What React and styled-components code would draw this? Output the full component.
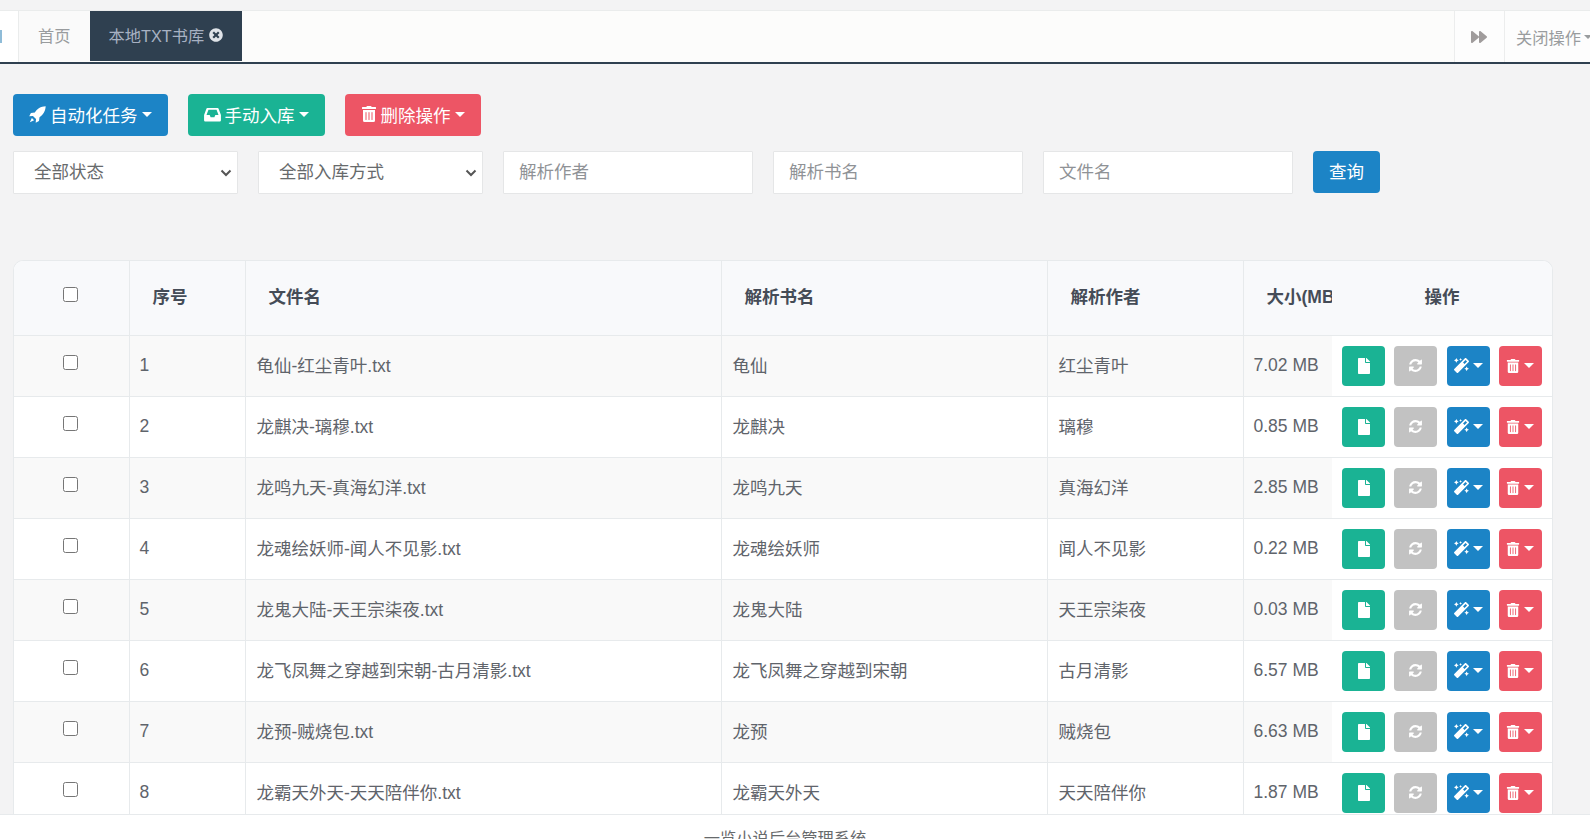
import React from 'react'
import styled, { createGlobalStyle } from 'styled-components'
import { FaFile, FaMagic, FaTrashAlt, FaTimesCircle, FaForward } from 'react-icons/fa'

const rows = [
  ['龟仙-红尘青叶.txt', '龟仙', '红尘青叶', '7.02 MB'],
  ['龙麒决-璃穆.txt', '龙麒决', '璃穆', '0.85 MB'],
  ['龙鸣九天-真海幻洋.txt', '龙鸣九天', '真海幻洋', '2.85 MB'],
  ['龙魂绘妖师-闻人不见影.txt', '龙魂绘妖师', '闻人不见影', '0.22 MB'],
  ['龙鬼大陆-天王宗柒夜.txt', '龙鬼大陆', '天王宗柒夜', '0.03 MB'],
  ['龙飞凤舞之穿越到宋朝-古月清影.txt', '龙飞凤舞之穿越到宋朝', '古月清影', '6.57 MB'],
  ['龙预-贼烧包.txt', '龙预', '贼烧包', '6.63 MB'],
  ['龙霸天外天-天天陪伴你.txt', '龙霸天外天', '天天陪伴你', '1.87 MB'],
]

const colors = { blue: '#1c84c6', green: '#1ab394', red: '#ed5565', gray: '#c2c2c2' }

const chevron = encodeURIComponent(
  '<svg xmlns="http://www.w3.org/2000/svg" width="12" height="8" viewBox="0 0 12 8"><path d="M1.5 1.5 6 6l4.5-4.5" fill="none" stroke="#555" stroke-width="2"/></svg>'
)

const RocketIcon = () => (
  <svg width="17" height="17" viewBox="0 0 16 16" fill="currentColor">
    <path d="M15.7.3C11 .5 7.5 2.8 5.5 6.1L1.8 6.6.2 9.7l3.5-.3 2.9 2.9-.3 3.5 3.1-1.6.5-3.7c3.3-2 5.6-5.5 5.8-10.2z" />
    <path d="M2.7 11.2l2.1 2.1L.8 15.2z" />
  </svg>
)

const InboxIcon = () => (
  <svg width="17" height="15" viewBox="0 0 18 16" fill="currentColor">
    <path
      fillRule="evenodd"
      d="M3.5 1h11c.4 0 .7.2.9.6L18 8.4V14c0 .8-.7 1.5-1.5 1.5h-15C.7 15.500 0 14.800 0 14V8.400l2.600-6.800c.2-.4.5-.6.900-.6zM4.700 3 2.600 8.500H6l1 2.500h4l1-2.500h3.400L13.300 3z"
    />
  </svg>
)

const RefreshIcon = () => (
  <svg width="15" height="15" viewBox="0 0 1792 1792" fill="currentColor">
    <path d="M1639 1056q0 5-1 7-64 268-268 434.500t-478 166.500q-146 0-282.500-55t-243.500-157l-129 129q-19 19-45 19t-45-19-19-45v-448q0-26 19-45t45-19h448q26 0 45 19t19 45-19 45l-137 137q71 66 161 102t187 36q134 0 250-65t186-179q11-17 53-117 8-23 30-23h192q13 0 22.500 9.500t9.500 22.500zm25-800v448q0 26-19 45t-45 19h-448q-26 0-45-19t-19-45 19-45l138-138q-148-137-349-137-134 0-250 65t-186 179q-11 17-53 117-8 23-30 23h-199q-13 0-22.500-9.500t-9.500-22.500v-7q65-268 270-434.500t480-166.500q146 0 284 55.500t245 156.500l130-129q19-19 45-19t45 19 19 45z" />
  </svg>
)

const GlobalStyle = createGlobalStyle`
  html, body {
    margin: 0;
    height: 100%;
    overflow: hidden;
    background: #f3f3f4;
    font-family: "Liberation Sans", "Noto Sans CJK SC", sans-serif;
    color: #676a6c;
  }
  * { box-sizing: border-box; }
`

const Page = styled.div`
  height: 839px;
  display: flex;
  flex-direction: column;
  overflow: hidden;
`

const TabBar = styled.div`
  margin-top: 10px;
  height: 54px;
  flex: none;
  display: flex;
  background: #fcfcfb;
  border-top: 1px solid #eaecec;
  border-bottom: 2px solid #2f4050;
  font-size: 16.25px;
  color: #999c9e;
`

const BackTab = styled.div`
  width: 19px;
  background: #fff;
  border-right: 1px solid #eaecec;
  display: flex;
  align-items: center;
  &::before {
    content: "";
    width: 2px;
    height: 13px;
    background: #8fbcd8;
  }
`

const Tab = styled.div`
  display: flex;
  align-items: center;
  gap: 5px;
  height: 50px;
  padding: 0 19px 2px;
  color: ${p => (p.active ? '#a7b1c2' : '#999c9e')};
  background: ${p => (p.active ? '#2f4050' : '#fafafa')};
  svg { font-size: 14px; color: #dfe3e8; }
`

const TabSpacer = styled.div`
  flex: 1;
`

const TabTool = styled.div`
  display: flex;
  align-items: center;
  justify-content: center;
  flex: none;
  width: ${p => p.width}px;
  padding-right: 2px;
  border-left: 1px solid #eceded;
  background: #fdfdfd;
  white-space: nowrap;
  overflow: hidden;
  svg { font-size: 16px; color: #a09c9c; }
`

const CloseTool = styled(TabTool)`
  justify-content: flex-start;
  padding: 0 0 0 11px;
  gap: 3px;
`

const Main = styled.main`
  flex: 1;
  min-height: 0;
  overflow: hidden;
  padding: 30px 38px 0 13px;
`

const Toolbar = styled.div`
  display: flex;
  gap: 20px;
`

const Caret = styled.span`
  display: inline-block;
  flex: none;
  width: 0;
  height: 0;
  border-left: ${p => p.size || 5}px solid transparent;
  border-right: ${p => p.size || 5}px solid transparent;
  border-top: ${p => p.size || 5}px solid currentColor;
`

const ActionButton = styled.button`
  height: 42px;
  display: flex;
  align-items: center;
  gap: 4px;
  padding: 0 16px 2px;
  border: 0;
  border-radius: 4px;
  background: ${p => colors[p.tone]};
  color: #fff;
  font: inherit;
  font-size: 17.5px;
  svg { flex: none; }
`

const NarrowIconButton = styled(ActionButton)`
  svg { font-size: 16px; }
`

const Filters = styled.div`
  display: flex;
  gap: 20px;
  margin-top: 15px;
  height: 43px;
`

const Select = styled.select`
  appearance: none;
  width: 225px;
  height: 43px;
  padding: 0 20px 2px;
  border: 1px solid #e5e6e7;
  border-radius: 1px;
  background: #fff url("data:image/svg+xml,${chevron}") no-repeat right 5px center;
  color: #676a6c;
  font: inherit;
  font-size: 17.5px;
`

const TextInput = styled.input`
  width: 250px;
  height: 43px;
  padding: 0 15px;
  border: 1px solid #e5e6e7;
  border-radius: 1px;
  background: #fff;
  font: inherit;
  font-size: 17.5px;
  &::placeholder { color: #8f9296; opacity: 1; }
`

const QueryButton = styled(ActionButton)`
  width: 67px;
  justify-content: center;
  padding: 0 0 3px;
`

const TableCard = styled.div`
  margin-top: 66px;
  width: 1540px;
  background: #fff;
  border: 1px solid #e7eaec;
  border-bottom: 0;
  border-radius: 10px 10px 0 0;
  overflow: hidden;
`

const Table = styled.table`
  width: 100%;
  table-layout: fixed;
  border-collapse: collapse;
  font-size: 17.5px;
`

const HeadRow = styled.tr`
  height: 74px;
  background: #f8f9fb;
`

const BodyRow = styled.tr`
  height: 61px;
  background: ${p => (p.striped ? '#f9f9f9' : '#fff')};
`

const Th = styled.th`
  padding: 0 0 4px ${p => p.pad ?? 23}px;
  text-align: ${p => p.align || 'left'};
  border-right: ${p => (p.noRule ? '0' : '1px solid #e7eaec')};
  border-bottom: 1px solid #e7eaec;
  color: #454c57;
  font-weight: 700;
  white-space: nowrap;
  overflow: hidden;
`

const HeadCheckCell = styled(Th)`
  padding: 0;
`

const Td = styled.td`
  padding: 0 0 0 10px;
  border-right: ${p => (p.noRule ? '0' : '1px solid #e7eaec')};
  border-bottom: 1px solid #e7eaec;
  color: #5f646b;
  white-space: nowrap;
  overflow: hidden;
`

const CheckCell = styled(Td)`
  padding: 0;
`

const TextCell = styled(Td)`
  padding: 0 0 3px 11px;
`

const OpCell = styled(Td)`
  background: #fff;
  padding: 0 10px;
`

const Ops = styled.div`
  display: flex;
  justify-content: space-between;
`

const OpButton = styled.button`
  width: 43px;
  height: 40px;
  display: flex;
  align-items: center;
  justify-content: center;
  gap: 4px;
  padding: 0;
  border: 0;
  border-radius: 4px;
  background: ${p => colors[p.tone]};
  color: #fff;
  svg { font-size: ${p => p.icon || 14}px; }
`

const Check = styled.input.attrs({ type: 'checkbox' })`
  display: block;
  width: 15px;
  height: 15px;
  margin: 0 0 6px 49px;
`

const Footer = styled.footer`
  flex: none;
  height: 25px;
  overflow: hidden;
  padding: 13px 20px 0 0;
  background: #fff;
  border-top: 1px solid #e7eaec;
  font-size: 16.25px;
  line-height: 20px;
  text-align: center;
  color: #676a6c;
`

export default function App() {
  return (
    <Page>
      <GlobalStyle />
      <TabBar>
        <BackTab />
        <Tab>首页</Tab>
        <Tab active>本地TXT书库 <FaTimesCircle /></Tab>
        <TabSpacer />
        <TabTool width={50}><FaForward /></TabTool>
        <CloseTool width={86}>关闭操作 <Caret size={4} /></CloseTool>
      </TabBar>
      <Main>
        <Toolbar>
          <ActionButton tone="blue"><RocketIcon />自动化任务<Caret /></ActionButton>
          <ActionButton tone="green"><InboxIcon />手动入库<Caret /></ActionButton>
          <NarrowIconButton tone="red"><FaTrashAlt />删除操作<Caret /></NarrowIconButton>
        </Toolbar>
        <Filters>
          <Select><option>全部状态</option></Select>
          <Select><option>全部入库方式</option></Select>
          <TextInput placeholder="解析作者" />
          <TextInput placeholder="解析书名" />
          <TextInput placeholder="文件名" />
          <QueryButton tone="blue">查询</QueryButton>
        </Filters>
        <TableCard>
          <Table>
            <colgroup>
              <col style={{ width: 115 }} />
              <col style={{ width: 116 }} />
              <col style={{ width: 476 }} />
              <col style={{ width: 326 }} />
              <col style={{ width: 196 }} />
              <col style={{ width: 89 }} />
              <col style={{ width: 220 }} />
            </colgroup>
            <thead>
              <HeadRow>
                <HeadCheckCell><Check /></HeadCheckCell>
                <Th>序号</Th>
                <Th>文件名</Th>
                <Th>解析书名</Th>
                <Th>解析作者</Th>
                <Th noRule>大小(MB)</Th>
                <Th pad={0} noRule align="center">操作</Th>
              </HeadRow>
            </thead>
            <tbody>
              {rows.map((row, i) => (
                <BodyRow key={row[0]} striped={i % 2 === 0}>
                  <CheckCell><Check /></CheckCell>
                  <Td>{i + 1}</Td>
                  <TextCell>{row[0]}</TextCell>
                  <TextCell>{row[1]}</TextCell>
                  <TextCell>{row[2]}</TextCell>
                  <Td noRule>{row[3]}</Td>
                  <OpCell noRule>
                    <Ops>
                      <OpButton tone="green" icon={16}><FaFile /></OpButton>
                      <OpButton tone="gray"><RefreshIcon /></OpButton>
                      <OpButton tone="blue" icon={15}><FaMagic /><Caret size={5} /></OpButton>
                      <OpButton tone="red"><FaTrashAlt /><Caret size={5} /></OpButton>
                    </Ops>
                  </OpCell>
                </BodyRow>
              ))}
            </tbody>
          </Table>
        </TableCard>
      </Main>
      <Footer>一览小说后台管理系统</Footer>
    </Page>
  )
}
